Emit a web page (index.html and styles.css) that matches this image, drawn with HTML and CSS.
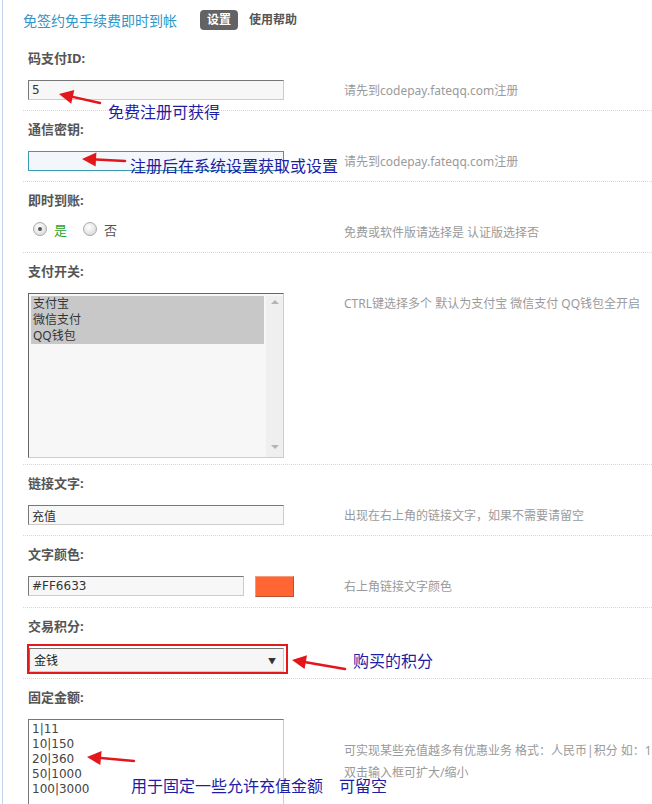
FILE: index.html
```html
<!DOCTYPE html>
<html lang="zh-CN">
<head>
    <meta charset="UTF-8">
    <title>码支付设置</title>
    <link rel="stylesheet" href="styles.css">
</head>
<body>
    <div class="page">
        <div class="head">
            <span class="title">免签约免手续费即时到帐</span>
            <span class="tab active">设置</span>
            <span class="tab">使用帮助</span>
        </div>

        <div class="row">
            <div class="label">码支付ID:</div>
            <div class="line">
                <div class="ctrl"><input class="txt" type="text" value="5"></div>
                <div class="desc">请先到codepay.fateqq.com注册</div>
            </div>
        </div>

        <div class="row">
            <div class="label">通信密钥:</div>
            <div class="line">
                <div class="ctrl"><input class="txt focus" type="text" value=""></div>
                <div class="desc">请先到codepay.fateqq.com注册</div>
            </div>
        </div>

        <div class="row">
            <div class="label">即时到账:</div>
            <div class="line">
                <div class="ctrl radios">
                    <span class="radio checked"></span><span class="opt yes">是</span>
                    <span class="radio"></span><span class="opt">否</span>
                </div>
                <div class="desc">免费或软件版请选择是 认证版选择否</div>
            </div>
        </div>

        <div class="row row-list">
            <div class="label">支付开关:</div>
            <div class="line">
                <div class="ctrl">
                    <div class="listbox">
                        <div class="opts">
                            <div class="item sel">支付宝</div>
                            <div class="item sel">微信支付</div>
                            <div class="item sel">QQ钱包</div>
                        </div>
                        <div class="sbar">
                            <span class="up"></span>
                            <span class="down"></span>
                        </div>
                    </div>
                </div>
                <div class="desc">CTRL键选择多个 默认为支付宝 微信支付 QQ钱包全开启</div>
            </div>
        </div>

        <div class="row">
            <div class="label">链接文字:</div>
            <div class="line">
                <div class="ctrl"><input class="txt" type="text" value="充值"></div>
                <div class="desc">出现在右上角的链接文字，如果不需要请留空</div>
            </div>
        </div>

        <div class="row">
            <div class="label">文字颜色:</div>
            <div class="line">
                <div class="ctrl color">
                    <input class="txt short" type="text" value="#FF6633">
                    <span class="swatch"></span>
                </div>
                <div class="desc">右上角链接文字颜色</div>
            </div>
        </div>

        <div class="row row-pick">
            <div class="label">交易积分:</div>
            <div class="line">
                <div class="ctrl">
                    <div class="pick">
                        <div class="dropdown"><span>金钱</span><span class="caret">▼</span></div>
                    </div>
                </div>
            </div>
        </div>

        <div class="row">
            <div class="label">固定金额:</div>
            <div class="line">
                <div class="ctrl">
                    <textarea class="area">1|11
10|150
20|360
50|1000
100|3000</textarea>
                </div>
                <div class="desc tall">可实现某些充值越多有优惠业务 格式：人民币|积分 如：1|11<br>双击输入框可扩大/缩小</div>
            </div>
        </div>
    </div>

    <div class="notes">
        <svg class="arrows" width="652" height="804" viewBox="0 0 652 804">
            <g stroke="#e3171b" stroke-width="2.5" stroke-linecap="round">
                <line x1="100" y1="103" x2="72.7" y2="96.9"/>
                <line x1="125" y1="161" x2="96" y2="159.6"/>
                <line x1="345" y1="669" x2="305.8" y2="662.2"/>
                <line x1="134" y1="761" x2="101" y2="758.1"/>
            </g>
            <g fill="#e3171b">
                <polygon points="59,94 74.3,90 71.2,103.7"/>
                <polygon points="82,159 96.4,152.6 95.6,166.6"/>
                <polygon points="292,660 307,655.3 304.6,669.1"/>
                <polygon points="87,757 101.6,751.1 100.3,765.1"/>
            </g>
        </svg>
        <span class="note n1">免费注册可获得</span>
        <span class="note n2">注册后在系统设置获取或设置</span>
        <span class="note n3">购买的积分</span>
        <span class="note n4">用于固定一些允许充值金额　可留空</span>
    </div>
</body>
</html>
```

FILE: styles.css
```css
body {
    margin: 0;
    font-family: "Noto Sans", "Noto Sans CJK SC", sans-serif;
    font-size: 12px;
    color: #333;
    background: #fff;
    position: relative;
    overflow: hidden;
    height: 804px;
}

.page {
    margin-left: 2px;
    border-left: 1px solid #bfd4eb;
    padding-left: 20px;
    min-height: 804px;
}

.head {
    height: 40px;
    display: flex;
    align-items: center;
}

.title {
    font-size: 14px;
    color: #2f96c8;
    margin-right: 23px;
}

.tab {
    font-size: 12px;
    font-weight: bold;
    color: #555;
    height: 20px;
    line-height: 20px;
}

.tab.active {
    background: #636363;
    color: #fff;
    padding: 0 7px;
    border-radius: 4px;
    margin-right: 11px;
}

.row {
    padding: 11px 0 10px 5px;
    border-bottom: 1px dotted #d6d6d6;
}

.row-list { padding-bottom: 6px; }
.row-pick { padding-bottom: 4px; }

.label {
    font-size: 13px;
    font-weight: bold;
    color: #555;
    line-height: 14px;
    margin-bottom: 15px;
}

.line {
    display: flex;
    align-items: flex-start;
}

.ctrl {
    width: 316px;
    flex-shrink: 0;
}

.desc {
    color: #9a9a9a;
    line-height: 19px;
    padding-top: 1px;
    white-space: nowrap;
}

.desc.tall {
    padding-top: 0;
    margin-top: 21px;
    line-height: 22px;
}

.txt {
    display: block;
    width: 256px;
    height: 20px;
    box-sizing: border-box;
    border: 1px solid;
    border-color: #777 #ccc #ccc #777;
    background: #f7f7f7;
    padding: 0 3px;
    font-family: "DejaVu Sans", "Noto Sans CJK SC", sans-serif;
    font-size: 12px;
    color: #333;
    outline: none;
}

.txt.focus {
    border-color: #3a9ab2;
    background: #f3f7fb;
}

.txt.short { width: 216px; }

.color {
    display: flex;
    gap: 11px;
}

.swatch {
    width: 39px;
    height: 21px;
    box-sizing: border-box;
    background: #ff6633;
    border: 1px solid;
    border-color: #f29a7c #b8512d #b8512d #f29a7c;
}

.radios {
    display: flex;
    align-items: center;
    height: 14px;
    margin-bottom: 6px;
    padding-left: 5px;
    box-sizing: border-box;
}

.radio {
    width: 12px;
    height: 12px;
    border-radius: 50%;
    border: 1px solid #a9a9a9;
    background: radial-gradient(circle at 40% 35%, #fff 0%, #e4e4e4 60%, #cfcfcf 100%);
    display: flex;
    align-items: center;
    justify-content: center;
}

.radio.checked::after {
    content: "";
    width: 4px;
    height: 4px;
    border-radius: 50%;
    background: #555;
}

.opt {
    font-size: 13px;
    color: #555;
    margin: 0 16px 0 7px;
}

.opt.yes { color: #2aa52a; }

.listbox {
    width: 256px;
    height: 165px;
    box-sizing: border-box;
    border: 1px solid;
    border-color: #666 #ccc #ccc #666;
    background: #f7f7f7;
    padding: 2px 0 0 2px;
    display: flex;
}

.opts {
    flex: 1;
    margin-right: 2px;
}

.item {
    line-height: 16px;
    padding-left: 2px;
    color: #333;
}

.item.sel { background: #c8c8c8; }

.sbar {
    width: 17px;
    background: #efefef;
    display: flex;
    flex-direction: column;
    justify-content: space-between;
    align-items: center;
    padding: 4px 0 8px;
    box-sizing: border-box;
}

.up, .down {
    width: 0;
    height: 0;
    border-left: 4px solid transparent;
    border-right: 4px solid transparent;
}

.up { border-bottom: 4px solid #b4b4b4; }
.down { border-top: 4px solid #b4b4b4; }

.pick {
    display: flex;
    width: max-content;
    border: 2px solid #e3191c;
    padding: 2px 2px 0 0;
    margin: -4px 0 0 -1px;
}

.dropdown {
    width: 255px;
    height: 24px;
    box-sizing: border-box;
    border: 1px solid;
    border-color: #777 #ccc #ccc #777;
    background: #f6f6f6;
    display: flex;
    align-items: center;
    justify-content: space-between;
    padding: 0 7px 0 4px;
    color: #222;
}

.caret {
    font-size: 8px;
    color: #333;
}

.area {
    display: block;
    width: 256px;
    height: 110px;
    box-sizing: border-box;
    border: 1px solid;
    border-color: #777 #ccc #ccc #777;
    background: #fff;
    padding: 2px 3px;
    font-family: "DejaVu Sans", sans-serif;
    font-size: 12px;
    line-height: 15px;
    color: #444;
    resize: none;
    overflow: hidden;
    outline: none;
}

.notes {
    position: absolute;
    left: 0;
    top: 0;
    width: 652px;
    height: 804px;
    pointer-events: none;
}

.arrows {
    position: absolute;
    left: 0;
    top: 0;
}

.note {
    position: absolute;
    font-family: "Noto Sans CJK SC", sans-serif;
    font-size: 16px;
    line-height: 20px;
    color: #1d1da6;
    white-space: nowrap;
}

.n1 { left: 108px; top: 101px; }
.n2 { left: 130px; top: 155px; }
.n3 { left: 353px; top: 650px; }
.n4 { left: 131px; top: 775px; }
```
